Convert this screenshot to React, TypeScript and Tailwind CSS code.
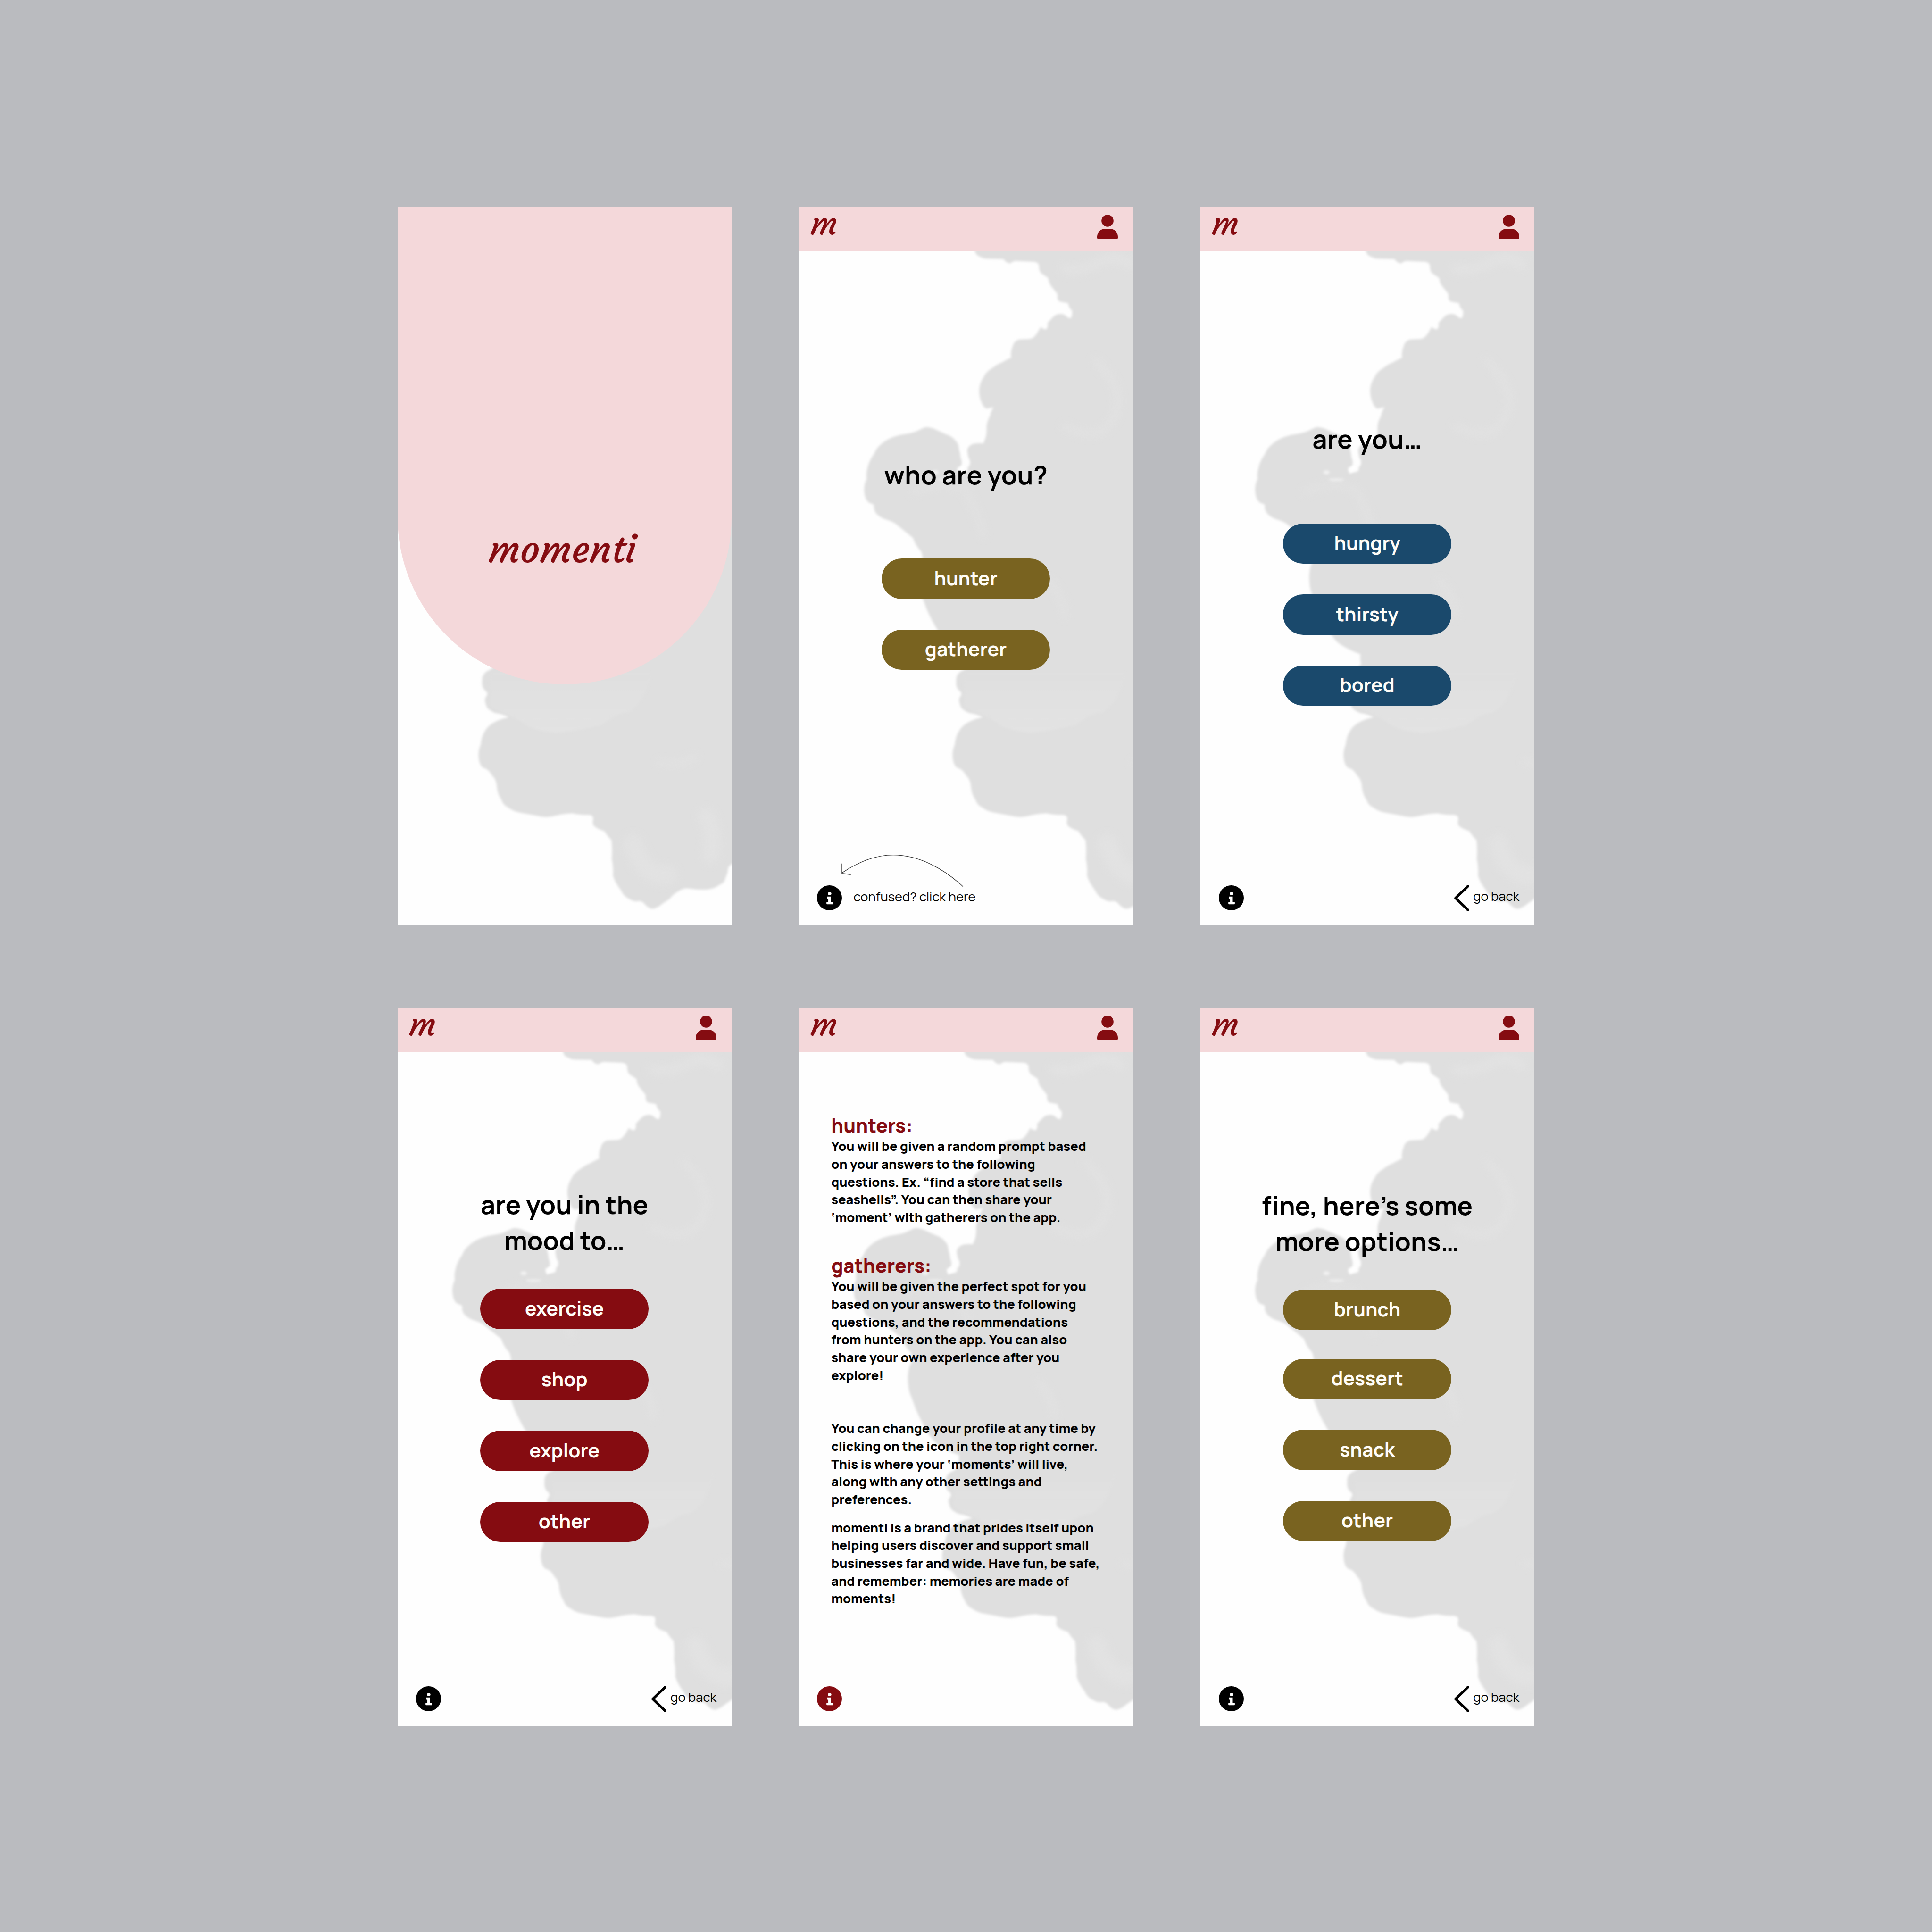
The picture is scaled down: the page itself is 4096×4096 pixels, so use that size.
import { useId, type ReactNode } from "react";

const CLOUD =
  "M420 90 L428 115 Q431 127 440 129 Q450 135 461 135 L502 136 Q509 147 520 147 Q528 140 538 141 L580 143 Q592 144 594 153 Q593 166 600 173 L618 185 Q619 200 627 208 L642 227 Q640 243 648 246 L669 250 Q671 263 680 270 Q680 284 676 289 Q668 289 663 282 Q655 277 648 278 Q637 278 630 286 L616 301 Q618 313 612 318 Q604 317 598 312 L588 329 Q578 343 568 343 L541 344 Q528 350 526 361 Q519 378 522 391 Q508 397 499 403 Q484 409 473 418 Q456 428 449 444 Q440 458 439 476 Q439 495 446 508 Q450 521 458 523 Q467 522 476 519 Q469 530 467 543 Q459 556 458 571 Q459 586 456 597 L450 613 Q440 612 431 613 Q418 614 412 622 Q406 629 409 638 Q410 650 415 657 Q417 668 411 674 Q400 682 387 692 Q381 686 390 676 Q398 664 391 650 Q390 638 387 629 Q386 613 378 606 Q368 594 354 590 L330 579 Q316 571 301 571 Q291 574 283 579 Q269 586 253 588 Q235 590 218 596 Q200 603 188 613 Q172 625 167 641 Q154 658 150 677 Q146 690 148 705 Q140 722 142 740 Q144 758 153 766 L167 772 Q165 785 173 795 Q184 806 200 811 Q218 816 230 827 L268 858 Q274 878 289 893 Q294 905 293 916 Q283 930 282 950 Q280 978 287 1000 Q297 1024 302 1040 Q315 1070 333 1099 Q336 1108 340 1110 Q350 1126 364 1135 Q388 1150 414 1159 Q412 1174 416 1184 Q404 1199 392 1203 Q378 1213 380 1228 Q378 1243 386 1252 Q396 1258 392 1266 Q384 1276 388 1284 Q390 1300 402 1305 Q410 1312 423 1313 Q439 1317 448 1322 Q432 1325 417 1332 Q397 1341 388 1356 Q378 1371 376 1393 Q368 1411 371 1430 Q373 1446 382 1453 Q397 1456 405 1473 Q417 1483 418 1504 Q420 1522 429 1535 Q434 1550 447 1556 Q460 1566 477 1569 L524 1578 Q545 1583 566 1578 Q590 1572 613 1571 Q632 1576 656 1575 Q668 1576 667 1586 Q664 1597 668 1603 Q678 1612 696 1617 Q704 1631 714 1640 Q717 1664 715 1689 Q720 1710 718 1732 Q725 1753 738 1769 Q747 1788 761 1793 Q773 1801 785 1798 Q795 1798 803 1809 Q813 1819 823 1818 Q837 1814 846 1805 L864 1793 Q876 1778 889 1772 Q902 1763 917 1766 Q941 1770 964 1768 Q982 1766 994 1756 Q1008 1751 1009 1738 Q1015 1728 1016 1713 Q1020 1702 1040 1696 L1040 90 Z";

function Watercolor({ shift = 0 }: { shift?: number }) {
  const id = useId().replace(/:/g, "");
  return (
    <svg viewBox="0 0 864 1860" preserveAspectRatio="none" className="pointer-events-none absolute inset-0 h-full w-full overflow-hidden" aria-hidden="true">
      <defs>
        <filter id={`${id}e`} x="-10%" y="-10%" width="120%" height="120%">
          <feGaussianBlur stdDeviation="3" />
        </filter>
        <filter id={`${id}s`} x="-30%" y="-30%" width="160%" height="160%">
          <feGaussianBlur stdDeviation="10" />
        </filter>
        <linearGradient id={`${id}g`} x1="0" y1="0" x2="0" y2="1">
          <stop offset="0.25" stopColor="#e3e3e3" stopOpacity="0" />
          <stop offset="1" stopColor="#e3e3e3" />
        </linearGradient>
      </defs>
      <g transform={`translate(${shift} 0)`}>
        <path d={CLOUD} fill="#dfdfdf" filter={`url(#${id}e)`} />
        <path d="M440 1150 L864 1150 Q836 1160 820 1200 Q806 1280 757 1310 Q725 1312 690 1342 Q630 1356 574 1363 Q530 1360 497 1345 Q480 1330 450 1318 L400 1295 L400 1215 Z" fill={`url(#${id}g)`} filter={`url(#${id}e)`} />
        <g filter={`url(#${id}s)`} fill="none" stroke="#e4e4e4" strokeLinecap="round" opacity="0.6">
          <path d="M740 400 Q830 480 780 560 Q740 610 660 570" strokeWidth="16" />
          <path d="M660 160 Q700 172 760 140 Q800 125 830 150" strokeWidth="26" />
          <path d="M620 970 Q665 1020 660 1060" strokeWidth="14" />
          <path d="M840 1440 Q890 1450 930 1425" strokeWidth="14" />
          <path d="M270 740 Q330 710 400 730 Q430 780 450 850" strokeWidth="14" />
          <path d="M770 1650 Q800 1740 860 1730" strokeWidth="50" />
          <path d="M960 1580 Q985 1630 970 1680" strokeWidth="44" />
        </g>
        <g filter={`url(#${id}e)`} fill="#ffffff">
          <ellipse cx="326" cy="688" rx="8" ry="5" opacity="0.6" />
          <ellipse cx="352" cy="707" rx="20" ry="4" opacity="0.4" />
          <ellipse cx="396" cy="680" rx="14" ry="8" opacity="0.9" />
        </g>
      </g>
    </svg>
  );
}

function UserIcon() {
  return (
    <svg viewBox="0 0 54 63.4" className="mt-[17px] h-[52px] w-[44px] text-[#850c11]" fill="currentColor" aria-label="profile">
      <circle cx="27" cy="15.8" r="15.7" />
      <path d="M3.4 63.4 Q0 63.4 0 60 V57.5 C0 45.5 9 36.8 20 36.8 H34 C45 36.8 54 45.5 54 57.5 V60 Q54 63.4 50.6 63.4 Z" />
    </svg>
  );
}

function InfoIcon({ className }: { className: string }) {
  return (
    <svg viewBox="0 0 194 194" className={`size-[53px] ${className}`} aria-label="info">
      <circle cx="97" cy="97" r="97" fill="currentColor" />
      <g fill="#fefefe">
        <circle cx="99" cy="64" r="13" />
        <path d="M80 87 H108 V130 H121 Q124 130 124 133 V144 Q124 147 121 147 H77 Q74 147 74 144 V133 Q74 130 77 130 H88 V104 H80 Q77 104 77 101 V90 Q77 87 80 87 Z" />
      </g>
    </svg>
  );
}

function Header() {
  return (
    <header className="relative flex h-[94px] shrink-0 items-start justify-between bg-[#f4d8da] pr-[31.5px] pl-[25px]">
      <span className="font-['Courgette','Liberation_Serif',serif] text-[70px] leading-[71px] text-[#850c11]">m</span>
      <UserIcon />
    </header>
  );
}

function Phone({ children, shift, footer }: { children: ReactNode; shift?: number; footer: ReactNode }) {
  return (
    <section className="relative flex h-[1523px] w-[708px] flex-col bg-[#fefefe]">
      <Watercolor shift={shift} />
      <Header />
      <div className="relative flex flex-1 flex-col">{children}</div>
      <footer className="relative flex h-[114px] shrink-0 items-center">{footer}</footer>
    </section>
  );
}

function BackFooter() {
  return (
    <>
      <InfoIcon className="ml-[39.5px] text-black" />
      <button className="mr-[31.5px] ml-auto flex items-center text-[27.3px] leading-[34px] text-black">
        <svg viewBox="0 0 32 56" className="h-[56px] w-[32px]" fill="none" stroke="currentColor" strokeWidth="5.5" strokeLinecap="round" strokeLinejoin="round">
          <path d="M29 3 L3 28 L29 53" />
        </svg>
        <span className="ml-[8px] pb-[8px]">go back</span>
      </button>
    </>
  );
}

function Options({ labels, color, className }: { labels: string[]; color: string; className: string }) {
  return (
    <div className={`flex flex-col items-center ${className}`}>
      {labels.map((label) => (
        <button key={label} className={`h-[85.5px] w-[357px] rounded-full pb-[3px] text-[40.9px] leading-none font-bold text-[#fffdf8] ${color}`}>
          {label}
        </button>
      ))}
    </div>
  );
}

function Title({ className, children }: { className: string; children: ReactNode }) {
  return <h1 className={`text-center text-[54.6px] leading-[75.5px] font-bold whitespace-nowrap text-black ${className}`}>{children}</h1>;
}

function Copy({ lines, className }: { lines: string[]; className: string }) {
  return (
    <p className={`text-[27.28px] leading-[37.65px] font-extrabold whitespace-nowrap text-black ${className}`}>
      {lines.map((line) => (
        <span key={line} className="block">
          {line}
        </span>
      ))}
    </p>
  );
}

export default function App() {
  return (
    <main className="flex h-[4096px] w-[4096px] items-start border-t border-r border-[#d5d6d9] bg-[#babbbf] pt-[436.5px] pl-[842.6px] font-['Manrope','Inter',sans-serif]">
      <div className="grid grid-cols-[708px_708px_708px] gap-x-[143px] gap-y-[175px]">
        <section className="relative h-[1523px] w-[708px] bg-[#fefefe]">
          <Watercolor shift={-161} />
          <div className="relative flex h-[1013px] items-start justify-center rounded-b-[354px] bg-[#f4d8da] pt-[671px] pr-[8px]">
            <span className="font-['Courgette','Liberation_Serif',serif] text-[81.9px] leading-[110px] text-[#850c11]">momenti</span>
          </div>
        </section>

        <Phone
          shift={27}
          footer={
            <>
              <InfoIcon className="ml-[38px] text-black" />
              <span className="ml-[25px] pb-[5px] text-[27.35px] leading-[34px] text-black">confused? click here</span>
              <svg viewBox="100 1670 340 100" className="absolute bottom-[73px] left-[82px] h-[82px] w-[278px]" fill="none" stroke="#333" strokeWidth="1.7">
                <path d="M425 1760 C375 1713 310 1678 244 1678 C200 1678 155 1695 111 1724.5" />
                <path d="M111 1700 V1725.5 L134 1729" stroke="#555" strokeWidth="2" />
              </svg>
            </>
          }
        >
          <Title className="mt-[437px]">who are you?</Title>
          <Options className="mt-[140px] gap-[65px]" color="bg-[#796320]" labels={["hunter", "gatherer"]} />
        </Phone>

        <Phone footer={<BackFooter />}>
          <Title className="mt-[361.6px]">are you…</Title>
          <Options className="mt-[141px] gap-[65px]" color="bg-[#1a496c]" labels={["hungry", "thirsty", "bored"]} />
        </Phone>

        <Phone footer={<BackFooter />}>
          <Title className="mt-[286.6px]">
            are you in the
            <br />
            mood to…
          </Title>
          <Options className="mt-[65px] gap-[65px]" color="bg-[#850c11]" labels={["exercise", "shop", "explore", "other"]} />
        </Phone>

        <Phone footer={<InfoIcon className="ml-[38px] text-[#850c11]" />}>
          <article className="pt-[135.3px] pl-[68.6px]">
            <h2 className="text-[40.9px] leading-[40px] font-extrabold text-[#850c11]">hunters:</h2>
            <Copy
              className="mt-[6.5px]"
              lines={[
                "You will be given a random prompt based",
                "on your answers to the following",
                "questions. Ex. “find a store that sells",
                "seashells”. You can then share your",
                "‘moment’ with gatherers on the app.",
              ]}
            />
            <h2 className="mt-[62.4px] text-[40.9px] leading-[40px] font-extrabold text-[#850c11]">gatherers:</h2>
            <Copy
              className="mt-[6.5px]"
              lines={[
                "You will be given the perfect spot for you",
                "based on your answers to the following",
                "questions, and the recommendations",
                "from hunters on the app. You can also",
                "share your own experience after you",
                "explore!",
              ]}
            />
            <Copy
              className="mt-[75px]"
              lines={[
                "You can change your profile at any time by",
                "clicking on the icon in the top right corner.",
                "This is where your ‘moments’ will live,",
                "along with any other settings and",
                "preferences.",
              ]}
            />
            <Copy
              className="mt-[22px]"
              lines={[
                "momenti is a brand that prides itself upon",
                "helping users discover and support small",
                "businesses far and wide. Have fun, be safe,",
                "and remember: memories are made of",
                "moments!",
              ]}
            />
          </article>
        </Phone>

        <Phone footer={<BackFooter />}>
          <Title className="mt-[288.6px]">
            fine, here’s some
            <br />
            more options…
          </Title>
          <div className="flex flex-col">
            <Options className="mt-[65px]" color="bg-[#796320]" labels={["brunch"]} />
            <Options className="mt-[61px] gap-[65px]" color="bg-[#796320]" labels={["dessert", "snack", "other"]} />
          </div>
        </Phone>
      </div>
    </main>
  );
}
